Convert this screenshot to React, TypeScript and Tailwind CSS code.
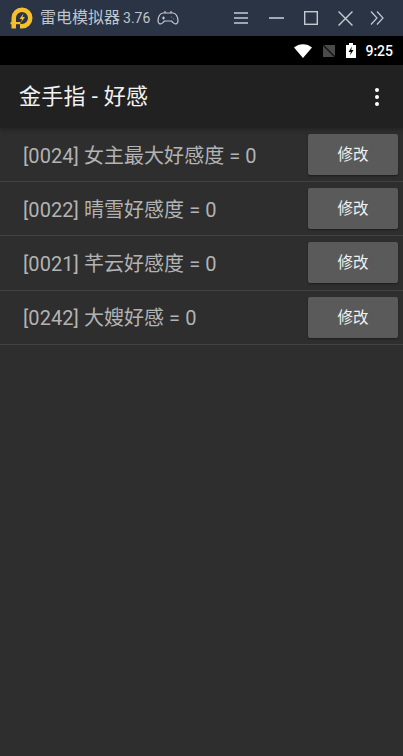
const rows = ["[0024] 女主最大好感度 = 0", "[0022] 晴雪好感度 = 0", "[0021] 芊云好感度 = 0", "[0242] 大嫂好感 = 0"];
const font = { fontFamily: '"Roboto","Noto Sans CJK SC",sans-serif' };

function Logo() {
  return (
    <svg width="24" height="24" viewBox="0 0 24 24" className="shrink-0">
      <path d="M1.5 22.5 V12 A10.5 10.5 0 1 1 12 22.5 H10 V18 H12 A6 6 0 1 0 6 12 V22.5 Z" fill="#f5c02c" />
      <rect x="0.5" y="16" width="10" height="2.2" fill="#f5c02c" />
      <path d="M13.5 7.5 L9.5 13 H12 L11 16.5 L15 11 H12.5 Z" fill="#f5c02c" />
    </svg>
  );
}

export default function App() {
  return (
    <div className="flex h-[756px] w-[403px] flex-col overflow-hidden bg-[#2e2e2e]" style={font}>
      <header className="flex h-9 shrink-0 items-center bg-[#2a3444] pl-[10px] text-[#bfc5cf]">
        <Logo />
        <span className="ml-[6px] text-[16px]">雷电模拟器</span>
        <span className="ml-[3px] text-[14px]">3.76</span>
        <svg width="24" height="16" viewBox="0 0 24 16" fill="none" stroke="#c5cad2" strokeWidth="1.2" className="ml-[6px]">
          <path d="M7 3 H17 C20 3 22 7 22 11 C22 14 19 15 17 12.5 L15.5 11 H8.5 L7 12.5 C5 15 2 14 2 11 C2 7 4 3 7 3 Z" />
          <path d="M9 1 V3 M15 1 V3 M6 8 H9 M7.5 6.5 V9.5 M15 7 H15.5 M17 9 H17.5" />
        </svg>
        <svg width="14" height="14" viewBox="0 0 14 14" stroke="#c5cad2" strokeWidth="1.6" className="ml-[54px]">
          <path d="M0 2 H14 M0 7 H14 M0 12 H14" />
        </svg>
        <svg width="15" height="14" viewBox="0 0 15 14" stroke="#c5cad2" strokeWidth="1.6" className="ml-[21px]">
          <path d="M0 7 H15" />
        </svg>
        <svg width="14" height="14" viewBox="0 0 14 14" fill="none" stroke="#c5cad2" strokeWidth="1.4" className="ml-[20px]">
          <rect x="0.7" y="0.7" width="12.6" height="12.6" />
        </svg>
        <svg width="15" height="15" viewBox="0 0 14 14" stroke="#c5cad2" strokeWidth="1.3" className="ml-[20px]">
          <path d="M0.5 0.5 L13.5 13.5 M13.5 0.5 L0.5 13.5" />
        </svg>
        <svg width="14" height="14" viewBox="0 0 14 14" fill="none" stroke="#c5cad2" strokeWidth="1.2" className="ml-[17px]">
          <path d="M1 0.5 L7 7 L1 13.5 M7 0.5 L13 7 L7 13.5" />
        </svg>
      </header>

      <div className="flex h-[29px] shrink-0 items-center justify-end bg-black pr-[10px] text-white">
        <svg width="18" height="14" viewBox="0 0 18 14" fill="#fff"><path d="M0 3.5 C5 -1 13 -1 18 3.5 L9 14 Z" /></svg>
        <svg width="14" height="14" viewBox="0 0 14 14" className="ml-[10px]">
          <path d="M1 13 V1 H13 V13 Z" fill="#4a4a4a" />
          <path d="M1 1 L13 13" stroke="#111" strokeWidth="1.2" />
        </svg>
        <svg width="10" height="15" viewBox="0 0 10 15" className="ml-[10px]">
          <path d="M0 2 H3 V0 H7 V2 H10 V15 H0 Z" fill="#fff" />
          <path d="M6 3.5 L2.5 9 H4.8 L4 12.5 L7.5 7 H5.2 Z" fill="#000" />
        </svg>
        <span className="ml-[9px] text-sm font-medium">9:25</span>
      </div>

      <div className="flex h-[63px] shrink-0 items-center justify-between bg-[#212121] pl-[19px] pr-[24px] shadow-[0_2px_4px_rgba(0,0,0,0.25)]">
        <h1 className="text-[22px] font-normal tracking-[0.3px] text-[#f2f2f2]">金手指 - 好感</h1>
        <div className="flex flex-col gap-[3px]">
          <span className="h-1 w-1 rounded-full bg-white" />
          <span className="h-1 w-1 rounded-full bg-white" />
          <span className="h-1 w-1 rounded-full bg-white" />
        </div>
      </div>

      <ul>
        {rows.map((row) => (
          <li key={row} className="flex h-[54.2px] items-center justify-between border-b border-[#424242] pl-[23px] pr-[5px]">
            <span className="pt-[2px] text-[20px] tracking-[0.05px] text-[#b3b3b3]">{row}</span>
            <button className="flex h-[41px] w-[90px] items-center justify-center rounded-[2px] bg-[#5a5a5a] pt-[2px] text-[15.5px] font-normal text-[#f0f0f0] shadow-[0_1px_2px_rgba(0,0,0,0.4)]">
              修改
            </button>
          </li>
        ))}
      </ul>
    </div>
  );
}
